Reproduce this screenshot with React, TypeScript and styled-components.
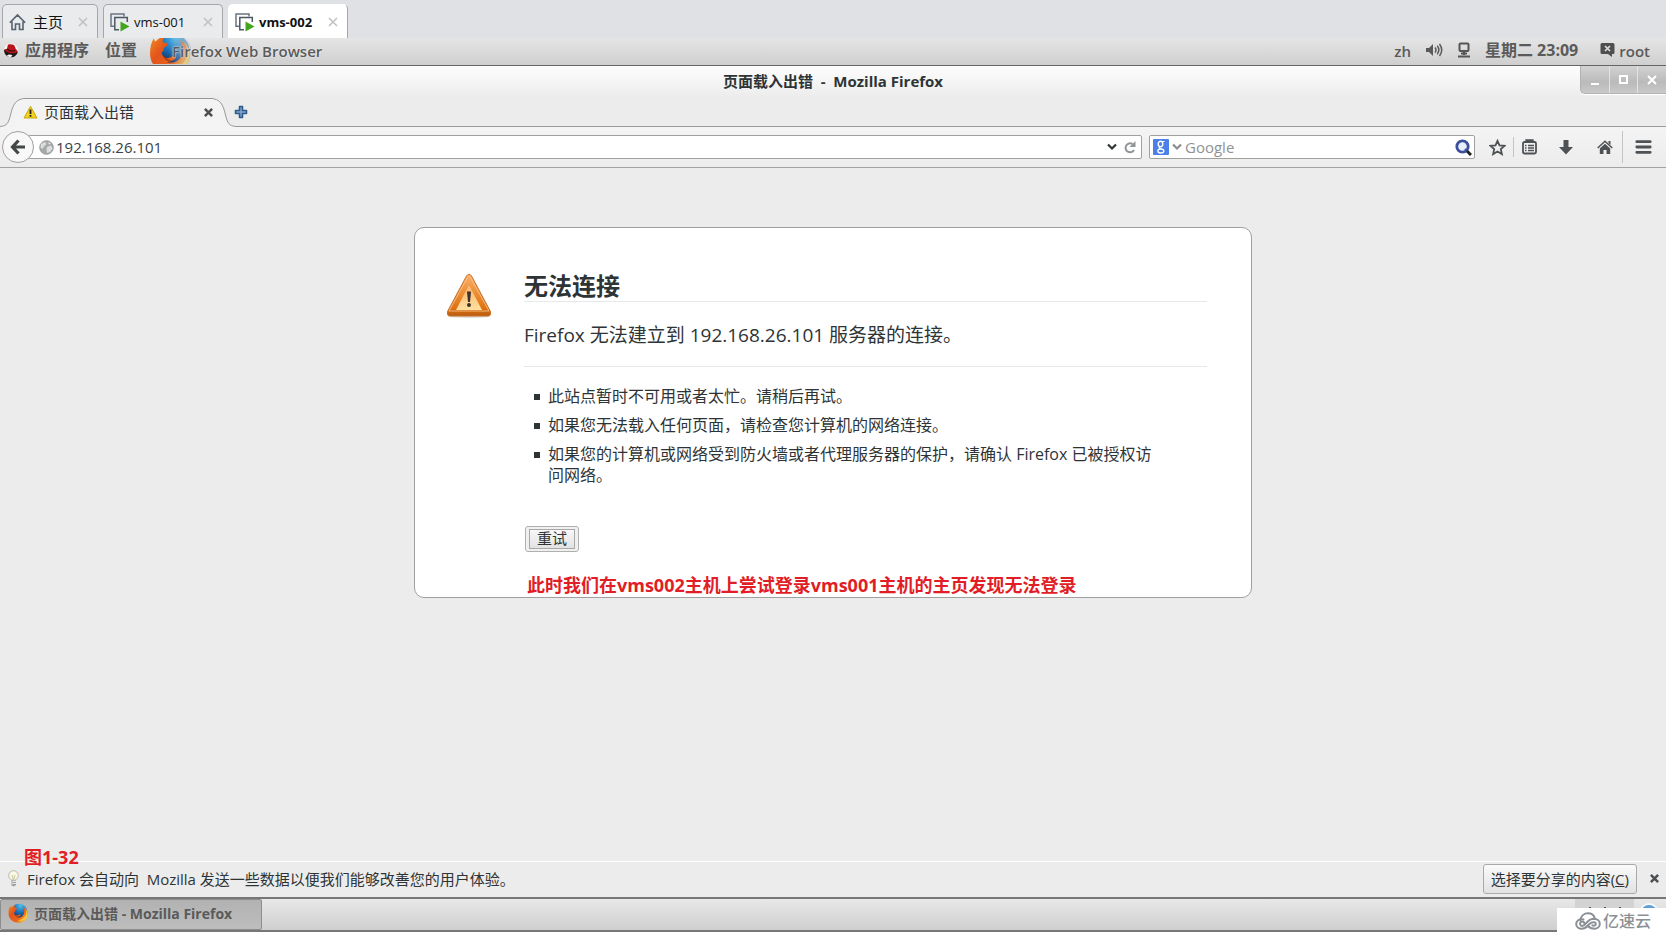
import React from "react";
import styled, { createGlobalStyle } from "styled-components";

const sans = `"Open Sans", "Noto Sans CJK SC", sans-serif`;

const GlobalStyle = createGlobalStyle`
  * { box-sizing: border-box; }
  html, body { margin: 0; padding: 0; }
  body { font-family: ${sans}; font-size: 15px; color: #2e3436; background: #fff; }
  button, input { font-family: inherit; font-size: inherit; color: inherit; margin: 0; }
  button { padding: 0; border: 0; background: none; cursor: pointer; }
  svg { display: block; flex: none; }
`;

const Screen = styled.div`
  position: relative;
  display: flex;
  flex-direction: column;
  min-height: 100vh;
  padding-bottom: 1px;
  overflow: hidden;
`;

/* virtual machine tab strip */

const VmStrip = styled.nav`
  display: flex;
  gap: 5px;
  height: 38px;
  padding: 4px 2px 0;
  background: #dfe1e4;
`;

const VmTab = styled.div<{ $active?: boolean; $width: number }>`
  display: flex;
  align-items: center;
  gap: 4px;
  width: ${(p) => p.$width}px;
  padding: 0 9px 0 6px;
  border: 1px solid ${(p) => (p.$active ? "#fff" : "#a3a7ab")};
  border-right-color: #a3a7ab;
  border-bottom: 0;
  border-radius: 5px 5px 0 0;
  background: ${(p) => (p.$active ? "#fff" : "#e9ebed")};
  color: #111;
  font-size: 13px;
  font-weight: ${(p) => (p.$active ? 700 : 400)};
  line-height: 18px;
  white-space: nowrap;
`;

const HomeLabel = styled.span`
  margin-left: 3px;
  font-size: 15px;
`;

const VmClose = styled.button`
  margin-left: auto;
  color: #bfc1c3;
`;

/* desktop panel */

const Panel = styled.header`
  display: flex;
  align-items: center;
  height: 28px;
  padding: 0 16px 3px 3px;
  border-bottom: 1px solid #666;
  background: linear-gradient(#e5e5e5, #cfcfcf);
  color: #5a5a5a;
  font-weight: 700;
  font-size: 16px;
  line-height: 20px;
  white-space: nowrap;
`;

const PanelButton = styled.button<{ $left: number }>`
  margin-left: ${(p) => p.$left}px;
  font-weight: 700;
  line-height: 20px;
`;

const AppMenu = styled.button`
  display: flex;
  align-items: center;
  height: 26px;
  margin: 2px 0 0 12px;
  font-size: 15px;
  font-weight: 600;
  line-height: 20px;
`;

const AppName = styled.span`
  margin-left: -19px;
  text-shadow: 0 0 2px #eee, 0 0 1px #eee;
`;

const PanelRight = styled.div`
  display: flex;
  align-items: center;
  gap: 14px;
  margin-left: auto;
`;

const SmallLabel = styled.span`
  padding-top: 2px;
  font-size: 15px;
  font-weight: 600;
`;

const Clock = styled.time`
  margin-right: 8px;
  word-break: keep-all;
`;

const UserButton = styled.button`
  display: flex;
  align-items: center;
  gap: 4px;
`;

/* browser chrome */

const TitleBar = styled.div`
  display: grid;
  grid-template-columns: 1fr auto 1fr;
  align-items: start;
  height: 32px;
  background: linear-gradient(#fdfdfd, #ececec);
`;

const WindowTitle = styled.h1`
  grid-column: 2;
  margin: 0;
  padding-top: 5px;
  font-size: 15px;
  font-weight: 700;
  line-height: 20px;
  white-space: pre;
`;

const WindowButtons = styled.div`
  display: flex;
  justify-self: end;
  width: 86px;
  height: 28px;
  border: 1px solid #b2b2b2;
  border-top: 0;
  border-right: 0;
  border-radius: 0 0 0 5px;
  background: linear-gradient(#d2d2d2, #bababa 60%, #c9c9c9);
  box-shadow: 0 1px 0 #fff;
`;

const WindowButton = styled.button`
  flex: 1;
  display: flex;
  justify-content: center;
  align-items: center;
  color: #fff;
  & + & { border-left: 1px solid #e4e4e4; }
`;

const TabRow = styled.div`
  display: flex;
  height: 29px;
  background: #ececec;
`;

const TabBody = styled.div`
  display: flex;
  align-items: center;
  gap: 6px;
  width: 190px;
  margin: 0 -3px 0 -3px;
  padding-bottom: 2px;
  border-top: 1px solid #999;
  background: #f3f3f3;
  line-height: 20px;
  white-space: nowrap;
  z-index: 1;
`;

const CloseButton = styled.button`
  color: #4d5052;
`;

const TabClose = styled(CloseButton)`
  margin-left: auto;
`;

const TabRest = styled.div`
  flex: 1;
  display: flex;
  align-items: center;
  border-bottom: 1px solid #999;
`;

const NewTab = styled.button`
  margin-left: -2px;
`;

const NavBar = styled.div`
  display: flex;
  align-items: center;
  height: 41px;
  padding: 0 3px 0 2px;
  border-bottom: 1px solid #a2a2a2;
  background: linear-gradient(#f4f4f4, #ececec);
  color: #4e5254;
`;

const BackButton = styled.button`
  z-index: 1;
  display: flex;
  align-items: center;
  justify-content: center;
  flex: none;
  width: 32px;
  height: 32px;
  border: 1px solid #a0a0a0;
  border-radius: 50%;
  background: #f8f8f8;
`;

const Field = styled.label`
  display: flex;
  align-items: center;
  height: 24px;
  border: 1px solid #a0a09c;
  border-radius: 2px;
  background: #fff;
`;

const UrlField = styled(Field)`
  flex: 1;
  gap: 2px;
  margin: 0 7px 0 -6px;
  padding: 0 0 0 10px;
`;

const SearchField = styled(Field)`
  flex: none;
  width: 326px;
  padding: 0 2px 0 3px;
`;

const FieldInput = styled.input`
  flex: 1;
  min-width: 0;
  height: 22px;
  padding: 0;
  border: 0;
  outline: 0;
  background: none;
  font-size: 15px;
  color: #3c4244;
  &::placeholder { color: #8f9294; opacity: 1; }
`;

const ToolButton = styled.button<{ $width?: number }>`
  display: flex;
  align-items: center;
  justify-content: center;
  flex: none;
  width: ${(p) => p.$width ?? 38}px;
  height: 32px;
`;

const StarButton = styled(ToolButton)`
  padding-left: 6px;
`;

const Separator = styled.i<{ $tall?: boolean }>`
  flex: none;
  width: 1px;
  height: ${(p) => (p.$tall ? 32 : 20)}px;
  background: #c4c4c4;
`;

/* page */

const Page = styled.main`
  flex: 1;
  display: flex;
  flex-direction: column;
  align-items: center;
  padding: 59px 24px 0;
  background: #ececec;
`;

const ErrorCard = styled.section`
  display: flex;
  align-items: flex-start;
  gap: 32px;
  width: 100%;
  max-width: 838px;
  padding: 42px 44px 0 31px;
  border: 1px solid #a0a0a0;
  border-radius: 10px;
  background: #fff;
`;

const ErrorIcon = styled.div`
  flex: none;
  padding-top: 3px;
`;

const ErrorBody = styled.div`
  flex: 1;
  min-width: 0;
`;

const ErrorTitle = styled.h2`
  margin: 0;
  border-bottom: 1px solid #e6e9e9;
  font-size: 24px;
  font-weight: 700;
  line-height: 31px;
`;

const ErrorShort = styled.p`
  margin: 0;
  padding: 18px 0 16px;
  border-bottom: 1px solid #e6e9e9;
  font-size: 19px;
  line-height: 30px;
`;

const ErrorList = styled.ul`
  margin: 19px 44px 0 0;
  padding: 0 0 0 24px;
  list-style: none;
  font-size: 16px;
  line-height: 21px;
`;

const ErrorItem = styled.li`
  position: relative;
  margin-bottom: 8px;
  &::before {
    content: "";
    position: absolute;
    left: -14px;
    top: 8px;
    width: 6px;
    height: 6px;
    background: #2e3436;
  }
`;

const RetryButton = styled.button`
  display: block;
  width: 54px;
  height: 26px;
  margin: 40px 0 0 1px;
  padding: 2px 3px;
  border: 1px solid #b0b0b0;
  border-radius: 3px;
  background: #f0f0f0;
`;

const RetryFace = styled.span`
  display: block;
  height: 20px;
  border: 1px solid #a8a8a8;
  background: linear-gradient(#f8f8f8, #e2e2e2);
  line-height: 16px;
`;

const Note = styled.strong`
  display: block;
  color: #e11d26;
  font-size: 18px;
  font-weight: 700;
  line-height: 24px;
  white-space: nowrap;
`;

const CardNote = styled(Note)`
  margin: 21px 0 0 3px;
`;

const FigureAnchor = styled.div`
  position: relative;
  align-self: stretch;
  margin: auto -24px 0;
`;

const FigureNote = styled(Note)`
  position: absolute;
  left: 24px;
  bottom: -8px;
`;

/* bottom bars */

const NoticeBar = styled.aside`
  display: flex;
  align-items: center;
  height: 38px;
  padding: 0 7px 2px;
  border-top: 1px solid #fff;
  border-bottom: 2px solid #777;
  background: #ececec;
  white-space: pre;
`;

const NoticeText = styled.span`
  margin-left: 7px;
`;

const ShareButton = styled.button`
  height: 30px;
  margin: 0 13px 0 auto;
  padding: 0 7px;
  border: 1px solid #aaa;
  border-radius: 3px;
  background: linear-gradient(#fafafa, #e2e2e2);
`;

const TaskBar = styled.footer`
  display: flex;
  height: 33px;
  border-bottom: 2px solid #777;
  background: linear-gradient(#e8e8e8, #cfcfcf);
`;

const TaskButton = styled.button`
  display: flex;
  align-items: center;
  gap: 6px;
  width: 262px;
  padding: 0 0 3px 7px;
  border: 1px solid #8e8e8e;
  border-radius: 2px;
  background: linear-gradient(#b2b2b2, #bdbdbd);
  color: #5a5a5a;
  font-size: 14px;
  font-weight: 700;
`;

const Tray = styled.div`
  display: flex;
  gap: 5px;
  margin-left: auto;
  padding-right: 7px;
`;

const Workspace = styled.div`
  display: flex;
  align-items: flex-start;
  justify-content: center;
  width: 59px;
  padding-top: 7px;
  background: #d3d3d3;
`;

const Watermark = styled.div`
  position: absolute;
  right: 0;
  bottom: 0;
  display: flex;
  align-items: center;
  gap: 2px;
  width: 109px;
  height: 25px;
  padding-left: 18px;
  background: #fff;
  color: #8b9096;
  font-size: 16px;
  font-weight: 500;
  line-height: 24px;
`;

/* drawings */

const Cross = ({ size, width }: { size: number; width: number }) => (
  <svg width={size} height={size} viewBox="0 0 10 10" fill="none" stroke="currentColor" strokeWidth={width}>
    <path d="M1 1l8 8M9 1L1 9" />
  </svg>
);

const HouseOutline = () => (
  <svg width="17" height="18" viewBox="0 0 17 18" fill="none" stroke="#56636f" strokeWidth="1.6">
    <path d="M.8 9.800L8.500 2l7.700 7.800M3 8.500v8h3.500v-5.500h4v5.500H14v-8" />
  </svg>
);

const VmIcon = () => (
  <svg width="20" height="20" viewBox="0 0 20 20" fill="none">
    <path d="M4 14.200H1V2h13v2.500" stroke="#6a7682" strokeWidth="1.500" />
    <path d="M9 17.800H4.800V5.500h12.500V10" fill="none" stroke="#4d5863" strokeWidth="1.500" />
    <path d="M10.500 9.500l9 5-9 5z" fill="#43a51c" />
  </svg>
);

const RedHat = () => (
  <svg width="16" height="15" viewBox="0 0 16 15">
    <circle cx="8" cy="7.500" r="7" fill="#f6f6f6" />
    <path d="M1 7c1-1 2.500-1 3.500 0 3 2.500 6.500 3 10.500 1.500-.8 3.500-3.600 5.800-7 5.800C4.300 14.300 1 11.500 1 7z" fill="#1d1716" />
    <path d="M1.500 6.500C2.500 6.800 3.500 6.500 4 5.500l.8-3.200c.8-1.500 2.200-.8 3.500-.7 1.400-.3 2.600.2 3.300 1.400l1.300 3.200c1.700 1 2.200 2.800.3 3.600C9 11 3 10 1.500 6.500z" fill="#b9141b" />
    <path d="M4 6.200c2 1.600 5 2.200 8 1.300" fill="none" stroke="#2a1413" strokeWidth="1.100" />
    <path d="M3.500 13c1.500-2 4-2 6-.6l-2 2z" fill="#f2f2f2" />
  </svg>
);

const FirefoxLogo = ({ size, id, faded }: { size: number; id: string; faded?: boolean }) => (
  <svg width={size} height={faded ? 26 : size} viewBox={faded ? "0 6 42 26" : "0 0 42 42"}>
    <defs>
      <radialGradient id={id + "b"} cx="60%" cy="10%" r="80%">
        <stop offset="0" stopColor="#55c0ee" />
        <stop offset=".5" stopColor="#1c74bd" />
        <stop offset="1" stopColor="#0c2a5c" />
      </radialGradient>
      <linearGradient id={id + "o"} x1="0" y1="0" x2="1" y2=".8">
        <stop offset="0" stopColor="#f08a1f" />
        <stop offset=".35" stopColor="#e3541c" />
        <stop offset=".7" stopColor="#e8641c" />
        <stop offset="1" stopColor="#fbd033" />
      </linearGradient>
      <linearGradient id={id + "f"}>
        <stop offset=".45" stopColor="#c8c8c8" stopOpacity="0" />
        <stop offset=".95" stopColor="#c8c8c8" stopOpacity=".65" />
      </linearGradient>
    </defs>
    <circle cx="23" cy="19" r="17.500" fill={`url(#${id}b)`} />
    <path
      d="M5 6c0 2 .5 3 1.500 3.500C9 6.500 12 5 15.500 5.200c-1.500 1.600-2 3.300-1.800 5 1.500.6 3.600.4 5 1.200.4 1.800-1.200 3-3.400 4-.8 1-.4 2-.5 3.200-1.600 1-2.300 2.200-1.800 3.900 1.600 3.200 5.200 4 8 3 2-.8 3.500-2 5.600-1 .8.600.2 1.500-.6 2.300-2 2-4.600 3.200-8 3.200 7 2 13.500-1.500 15.500-8 1.200-5-.2-10-3-14 6.500 3.500 10.500 8.500 10.500 15C41 33 33 41.500 22 41.500 10.500 41.500 1 33 1 21.500 1 15 2.500 10 5 6z"
      fill={`url(#${id}o)`}
    />
    <path d="M34 9c5 5 6 13 2.500 19-4 7-11 9-17.500 7 8 5 17.500 1.500 20.500-6.500C42 21 39.500 13 34 9z" fill="#fcd535" opacity=".9" />
    <path d="M14 24c1.500 5 6.500 7 12 4.500-4 .5-8-1-9.500-4z" fill="#7a2411" opacity=".5" />
    {faded && <circle cx="22" cy="21" r="21" fill={`url(#${id}f)`} />}
  </svg>
);

const Speaker = () => (
  <svg width="18" height="14" viewBox="0 0 18 14" fill="none" stroke="#5a5a5a" strokeWidth="1.500">
    <path d="M1 5h3l4-4v12L4 9H1z" fill="#5a5a5a" stroke="none" />
    <path d="M10 4.500q2 2.500 0 5M12.200 2.800q3.300 4.200 0 8.400M14.500 1q4.500 6 0 12" />
  </svg>
);

const Network = () => (
  <svg width="14" height="16" viewBox="0 0 14 16" fill="none" stroke="#555" strokeWidth="2">
    <rect x="2.500" y="1.500" width="9" height="7.500" rx="1" />
    <path d="M7 9v4M4 11.500h6M1 14.500h12" />
  </svg>
);

const ChatBadge = () => (
  <svg width="15" height="14" viewBox="0 0 15 14">
    <path d="M2 0h11a1.500 1.500 0 0 1 1.500 1.500v8A1.500 1.500 0 0 1 13 11h-1v3l-4-3H2A1.500 1.500 0 0 1 .5 9.500v-8A1.500 1.500 0 0 1 2 0z" fill="#4f4f4f" />
    <path d="M5 3l5 5M10 3L5 8" stroke="#ddd" strokeWidth="1.700" />
  </svg>
);

const TabEdge = ({ flip }: { flip?: boolean }) => (
  <svg width="26" height="29" viewBox="0 0 26 29">
    <g transform={flip ? "translate(26 0) scale(-1 1)" : undefined}>
      <path d="M0 28.500C7 28 8.500 25 10.500 17 13 6 16 .5 26 .5V29H0z" fill="#f3f3f3" />
      <path d="M0 28.500C7 28 8.500 25 10.500 17 13 6 16 .5 26 .5" fill="none" stroke="#999" />
    </g>
  </svg>
);

const YellowWarning = () => (
  <svg width="15" height="14" viewBox="0 0 15 14">
    <path d="M7.500 1.300L14 13H1z" fill="#f2d21d" stroke="#c9a90d" strokeLinejoin="round" />
    <path d="M7.500 4.500v4.500M7.500 10v1.700" stroke="#222" strokeWidth="1.800" />
  </svg>
);

const OrangeWarning = () => (
  <svg width="46" height="46" viewBox="0 0 46 46">
    <defs>
      <linearGradient id="wo" x1="0" y1="0" x2="0" y2="1">
        <stop offset="0" stopColor="#fbb066" />
        <stop offset=".8" stopColor="#df7412" />
        <stop offset="1" stopColor="#b95c12" />
      </linearGradient>
      <linearGradient id="wi" x1="0" y1="0" x2="0" y2="1">
        <stop offset="0" stopColor="#fbb26a" />
        <stop offset="1" stopColor="#ffe0a0" />
      </linearGradient>
    </defs>
    <ellipse cx="23" cy="43.500" rx="21" ry="1.500" fill="#ddd" />
    <path d="M20.500 3Q23-.5 25.500 3L44.500 38.500V41Q44.500 43 42 43H4Q1.500 43 1.500 41V38.500z" fill="url(#wo)" stroke="#c8702a" />
    <path d="M21.500 4.500Q23 2 24.500 4.500L43 38H3z" fill="none" stroke="#fbc793" strokeWidth="1" opacity=".8" />
    <path d="M23 12l13 25H10z" fill="url(#wi)" />
    <path d="M21 18.500h4l-1 10.500h-2z" fill="#3b332b" />
    <circle cx="23" cy="32" r="2" fill="#3b332b" />
  </svg>
);

const BluePlus = () => (
  <svg width="14" height="14" viewBox="0 0 14 14">
    <path d="M5.500 1.500h3v4h4v3h-4v4h-3v-4h-4v-3h4z" fill="#7da4cc" stroke="#2f5b8c" strokeWidth="1.600" strokeLinejoin="round" />
  </svg>
);

const BackArrow = () => (
  <svg width="16" height="16" viewBox="0 0 16 16" fill="none" stroke="#444748" strokeWidth="3.200">
    <path d="M8.500 1.500L2.500 8l6 6.500M3 8h12" />
  </svg>
);

const Globe = () => (
  <svg width="15" height="15" viewBox="0 0 15 15">
    <circle cx="7.500" cy="7.500" r="6.800" fill="#a6a8a9" stroke="#9b9d9e" />
    <path d="M2 4l4-2 1.500 2L5 6.500 3.500 9 1.500 7.500zM8 7l4-1.500 1.500 3L11 12l-3 1-.5-3z" fill="#dcdddd" />
    <path d="M9 2l3 1.500-2 1z" fill="#e4e5e5" />
  </svg>
);

const Chevron = ({ color }: { color: string }) => (
  <svg width="10" height="8" viewBox="0 0 10 8" fill="none" stroke={color} strokeWidth="2.200">
    <path d="M1 1.500l4 4 4-4" />
  </svg>
);

const Reload = () => (
  <svg width="12" height="13" viewBox="0 0 12 13" fill="none" stroke="#8f9496" strokeWidth="2">
    <path d="M8.500 3A4.500 4.500 0 1 0 10 9" />
    <path d="M11.500 0v6H5.500z" fill="#8f9496" stroke="none" />
  </svg>
);

const GoogleMark = () => (
  <svg width="16" height="16" viewBox="0 0 16 16" fill="none" stroke="#fff">
    <rect width="16" height="16" rx="1" fill="#4a80e8" stroke="none" />
    <ellipse cx="7.500" cy="5" rx="2.300" ry="2.700" strokeWidth="1.400" />
    <path d="M9 2.500h2.500M7 7.700c-2 1.300 0 1.600 1.500 2.100" strokeWidth="1.200" />
    <ellipse cx="7.800" cy="12" rx="3" ry="2" strokeWidth="1.300" />
  </svg>
);

const Magnifier = () => (
  <svg width="17" height="17" viewBox="0 0 17 17" fill="none">
    <circle cx="7.500" cy="7.500" r="5.700" fill="#e9eefb" stroke="#3b4f9c" strokeWidth="2.800" />
    <path d="M10 10l2 2" stroke="#3b4f9c" strokeWidth="2" />
    <path d="M12 12l4 4" stroke="#222" strokeWidth="3" />
  </svg>
);

const Star = () => (
  <svg width="17" height="17" viewBox="0 0 17 17" fill="none" stroke="currentColor" strokeWidth="1.800">
    <path d="M8.500 1.800l2 4.500 5 .5-3.700 3.300 1.100 5-4.400-2.600-4.400 2.600 1.100-5L1.500 6.800l5-.5z" />
  </svg>
);

const Clipboard = () => (
  <svg width="15" height="16" viewBox="0 0 15 16" fill="none" stroke="currentColor" strokeWidth="1.800">
    <rect x="1" y="3" width="13" height="11.500" rx="1.500" />
    <path d="M4.500 3V1.500h6V3" strokeWidth="2.400" />
    <path d="M3 6.500h1.500M6 6.500h6M3 9h1.500M6 9h6M3 11.500h1.500M6 11.500h6" strokeWidth="1.400" />
  </svg>
);

const DownArrow = () => (
  <svg width="14" height="15" viewBox="0 0 14 15" fill="currentColor">
    <path d="M4.500 0h5v7H14l-7 7.500L0 7h4.500z" />
  </svg>
);

const HomeSolid = () => (
  <svg width="16" height="15" viewBox="0 0 16 15">
    <path d="M.7 8L8 1.200 15.300 8" fill="none" stroke="currentColor" strokeWidth="1.500" />
    <path d="M2.800 8.500L8 3.700l5.200 4.800V14H9.500v-4h-3v4H2.800zM11.500 1h2v4l-2-2z" fill="currentColor" />
  </svg>
);

const MenuBars = () => (
  <svg width="17" height="14" viewBox="0 0 17 14" stroke="currentColor" strokeWidth="2.800" strokeLinecap="round">
    <path d="M1.800 1.700h13.400M1.800 7h13.400M1.800 12.300h13.400" />
  </svg>
);

const Bulb = () => (
  <svg width="13" height="17" viewBox="0 0 13 17">
    <circle cx="6.500" cy="5.500" r="4.800" fill="#f7f8e6" stroke="#b9baa8" />
    <path d="M5 5l1.500 5L8 5" fill="none" stroke="#c9c9a0" />
    <path d="M4 10.500h5v4.500l-2.500 1.500L4 15z" fill="#9a9c9c" />
    <path d="M4 12l5-.7M4 14l5-.7" stroke="#ececec" />
  </svg>
);

const CloudLogo = () => (
  <svg width="26" height="18" viewBox="0 0 26 18" fill="none" stroke="#8b9096" strokeWidth="2" strokeLinecap="round">
    <path d="M5.500 8C6 3.500 9.500 1.200 13 1.200c3.500 0 6 2 6.800 5" />
    <path d="M9.500 11.800a2.200 2.200 0 1 0-2.200 2.200c3.700 0 4.500-7 11.200-7.300 3.500 0 6.300 2 6.300 5 0 3-2.300 5-5.300 5-3.500 0-5.500-1.500-7-3" />
    <path d="M8.500 7.500C4 6.500 1.200 9 1.200 12c0 3 2.500 4.800 5.500 4.800 4.500 0 6-3.500 8.300-5.300 2.500-1.800 5.800-1.800 5.800.5 0 1.800-2.300 2.200-3.500 1.300" />
  </svg>
);

export default function App() {
  return (
    <Screen>
      <GlobalStyle />
      <VmStrip>
        <VmTab $width={96}>
          <HouseOutline />
          <HomeLabel>主页</HomeLabel>
          <VmClose aria-label="关闭"><Cross size={10} width={1.6} /></VmClose>
        </VmTab>
        <VmTab $width={120}>
          <VmIcon />
          vms-001
          <VmClose aria-label="关闭"><Cross size={10} width={1.6} /></VmClose>
        </VmTab>
        <VmTab $width={120} $active>
          <VmIcon />
          vms-002
          <VmClose aria-label="关闭"><Cross size={10} width={1.6} /></VmClose>
        </VmTab>
      </VmStrip>

      <Panel>
        <RedHat />
        <PanelButton $left={6}>应用程序</PanelButton>
        <PanelButton $left={16}>位置</PanelButton>
        <AppMenu>
          <FirefoxLogo size={42} id="top" faded />
          <AppName>Firefox Web Browser</AppName>
        </AppMenu>
        <PanelRight>
          <SmallLabel>zh</SmallLabel>
          <Speaker />
          <Network />
          <Clock>星期二 23:09</Clock>
          <UserButton>
            <ChatBadge />
            <SmallLabel>root</SmallLabel>
          </UserButton>
        </PanelRight>
      </Panel>

      <TitleBar>
        <WindowTitle>页面载入出错  -  Mozilla Firefox</WindowTitle>
        <WindowButtons>
          <WindowButton aria-label="最小化">
            <svg width="8" height="10" viewBox="0 0 8 10"><path d="M0 9h8" stroke="currentColor" strokeWidth="2" /></svg>
          </WindowButton>
          <WindowButton aria-label="最大化">
            <svg width="9" height="9" viewBox="0 0 9 9"><rect x="1" y="1" width="7" height="7" fill="none" stroke="currentColor" strokeWidth="2" /></svg>
          </WindowButton>
          <WindowButton aria-label="关闭窗口"><Cross size={10} width={2} /></WindowButton>
        </WindowButtons>
      </TitleBar>

      <TabRow>
        <TabEdge />
        <TabBody>
          <YellowWarning />
          页面载入出错
          <TabClose aria-label="关闭标签页"><Cross size={9} width={2.8} /></TabClose>
        </TabBody>
        <TabEdge flip />
        <TabRest>
          <NewTab aria-label="打开新标签页"><BluePlus /></NewTab>
        </TabRest>
      </TabRow>

      <NavBar>
        <BackButton aria-label="后退"><BackArrow /></BackButton>
        <UrlField>
          <Globe />
          <FieldInput aria-label="网址" defaultValue="192.168.26.101" />
          <Chevron color="#2e3436" />
          <ToolButton $width={22} aria-label="刷新"><Reload /></ToolButton>
        </UrlField>
        <SearchField>
          <GoogleMark />
          <ToolButton $width={16} aria-label="选择搜索引擎"><Chevron color="#8a8d8f" /></ToolButton>
          <FieldInput aria-label="搜索" placeholder="Google" />
          <Magnifier />
        </SearchField>
        <StarButton aria-label="收藏"><Star /></StarButton>
        <Separator />
        <ToolButton $width={30} aria-label="书签"><Clipboard /></ToolButton>
        <ToolButton $width={44} aria-label="下载"><DownArrow /></ToolButton>
        <ToolButton $width={34} aria-label="主页"><HomeSolid /></ToolButton>
        <Separator $tall />
        <ToolButton $width={40} aria-label="菜单"><MenuBars /></ToolButton>
      </NavBar>

      <Page>
        <ErrorCard>
          <ErrorIcon><OrangeWarning /></ErrorIcon>
          <ErrorBody>
            <ErrorTitle>无法连接</ErrorTitle>
            <ErrorShort>Firefox 无法建立到 192.168.26.101 服务器的连接。</ErrorShort>
            <ErrorList>
              <ErrorItem>此站点暂时不可用或者太忙。请稍后再试。</ErrorItem>
              <ErrorItem>如果您无法载入任何页面，请检查您计算机的网络连接。</ErrorItem>
              <ErrorItem>如果您的计算机或网络受到防火墙或者代理服务器的保护，请确认 Firefox 已被授权访问网络。</ErrorItem>
            </ErrorList>
            <RetryButton><RetryFace>重试</RetryFace></RetryButton>
            <CardNote>此时我们在vms002主机上尝试登录vms001主机的主页发现无法登录</CardNote>
          </ErrorBody>
        </ErrorCard>
        <FigureAnchor><FigureNote>图1-32</FigureNote></FigureAnchor>
      </Page>

      <NoticeBar>
        <Bulb />
        <NoticeText>Firefox 会自动向  Mozilla 发送一些数据以便我们能够改善您的用户体验。</NoticeText>
        <ShareButton>选择要分享的内容(<u>C</u>)</ShareButton>
        <CloseButton aria-label="关闭提示"><Cross size={9} width={2.8} /></CloseButton>
      </NoticeBar>

      <TaskBar>
        <TaskButton>
          <FirefoxLogo size={20} id="task" />
          页面载入出错 - Mozilla Firefox
        </TaskButton>
        <Tray>
          <Workspace>
            <svg width="34" height="3" viewBox="0 0 34 3" fill="#555"><path d="M1 1h2v2H1zM16 1h2v2h-2zM31 1h2v2h-2z" /></svg>
          </Workspace>
          <svg width="20" height="22" viewBox="0 0 20 22">
            <circle cx="10" cy="14" r="9" fill="#5f9fd8" stroke="#f4f8fc" strokeWidth="2" />
          </svg>
        </Tray>
      </TaskBar>

      <Watermark><CloudLogo />亿速云</Watermark>
    </Screen>
  );
}
